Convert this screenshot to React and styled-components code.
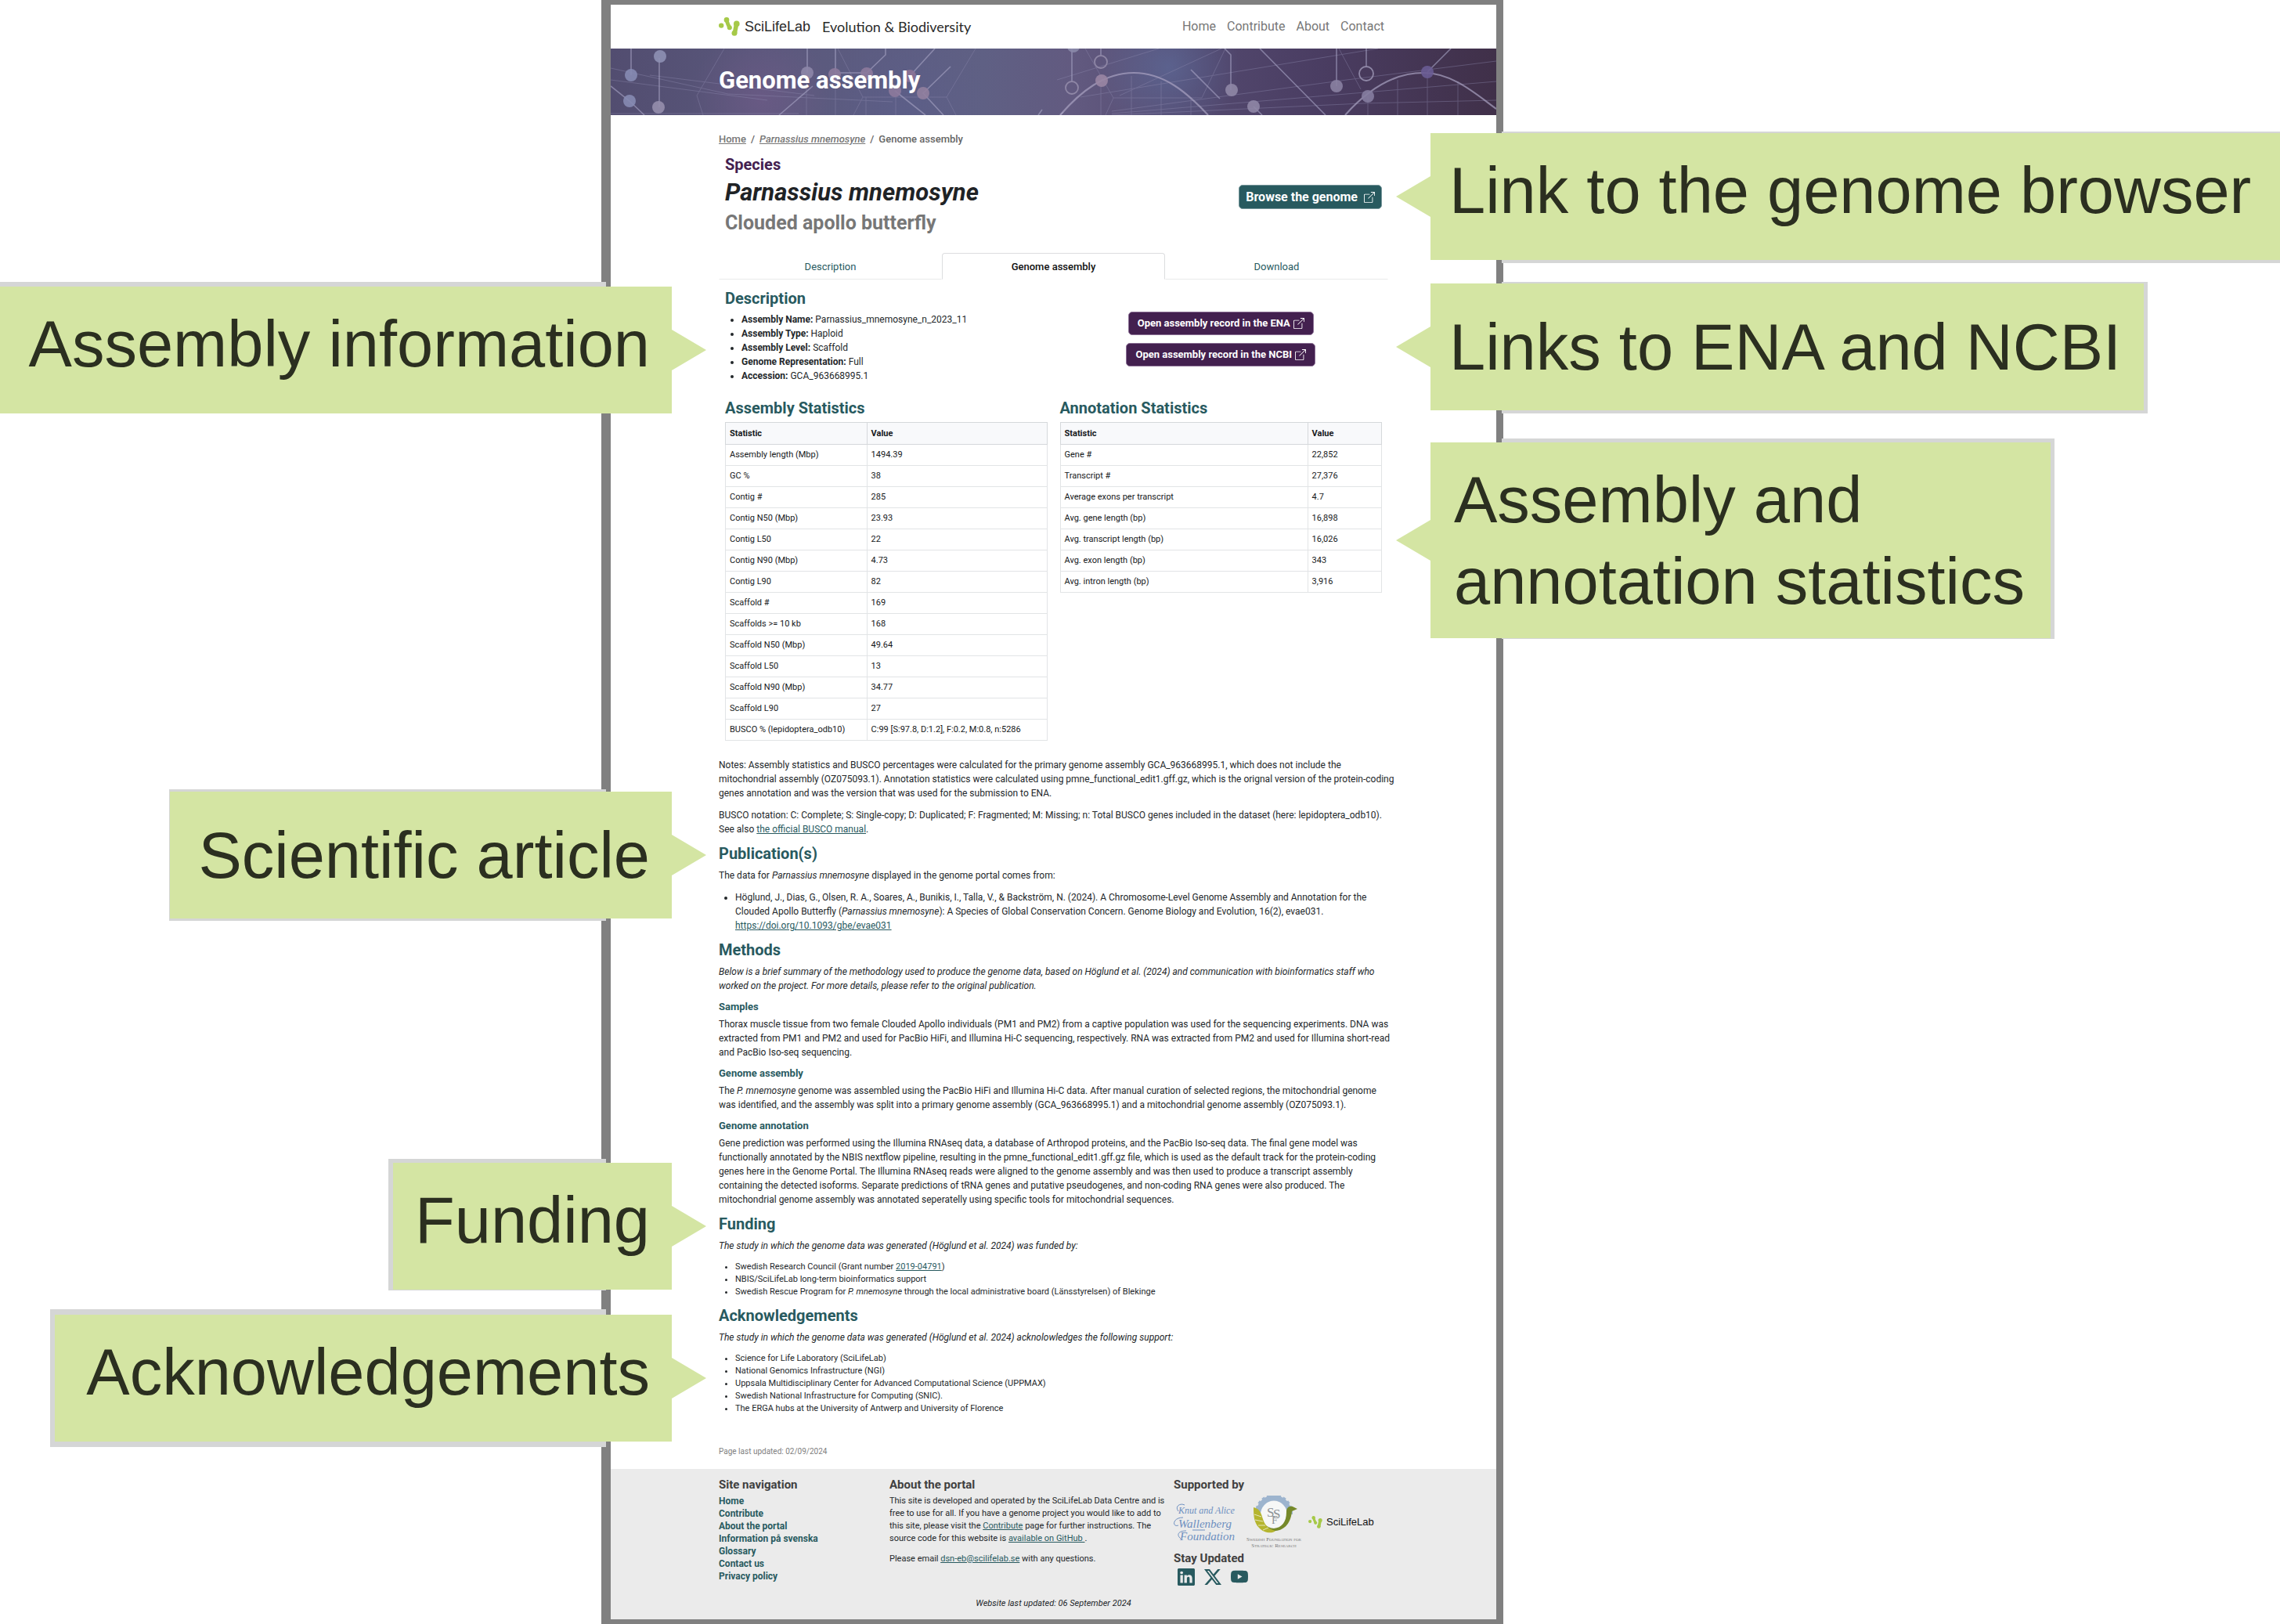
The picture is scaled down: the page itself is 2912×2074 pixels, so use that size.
import React from 'react';
import styled, { createGlobalStyle } from 'styled-components';
import { BsBoxArrowUpRight, BsLinkedin, BsTwitterX, BsYoutube } from 'react-icons/bs';

const teal = '#285a5f';
const purple = '#43204f';
const ink = '#23272a';
const lime = '#d4e5a3';

const GlobalStyle = createGlobalStyle`
  *, *::before, *::after { box-sizing: border-box; }
  body {
    margin: 0;
    background: #fff;
    color: ${ink};
    font-family: Roboto, "Noto Sans", sans-serif;
    font-size: 12px;
    line-height: 18px;
  }
  a { color: ${teal}; }
`;

/* ---------- stage and page frame ---------- */

const Stage = styled.div`
  display: grid;
  grid-template-columns: 24fr 36fr 31fr;
  min-height: 100vh;
  overflow: hidden;
`;

const Frame = styled.div`
  grid-column: 2;
  position: relative;
  display: flex;
  flex-direction: column;
  border: solid #808080;
  border-width: 6px 9px 6px 12px;
`;

/* ---------- callouts ---------- */

const Callout = styled.aside`
  position: absolute;
  z-index: 1;
  top: ${(p) => p.$top}px;
  ${(p) => (p.$side === 'left' ? 'right: calc(100% - 78px);' : 'left: calc(100% - 84px);')}
  width: ${(p) => p.$width}px;
  min-height: 162px;
  padding: ${(p) => (p.$low ? 30 : 22)}px ${(p) => p.$pad}px 20px;
  background: ${lime};
  color: #2b2f20;
  font-family: "Liberation Sans", Arial, sans-serif;
  font-size: 83px;
  line-height: 104px;
  text-align: ${(p) => (p.$side === 'left' ? 'right' : 'left')};
  white-space: nowrap;

  &::before {
    content: "";
    position: absolute;
    z-index: -1;
    top: ${(p) => -p.$rim[0]}px;
    bottom: ${(p) => -p.$rim[2]}px;
    background: linear-gradient(${lime}, ${lime}) content-box, #d5d6d6;
    ${(p) =>
      p.$side === 'left'
        ? `left: ${-p.$rim[1]}px; right: 84px; padding-left: ${p.$rim[1]}px;`
        : `right: ${-p.$rim[1]}px; left: 91px; padding-right: ${p.$rim[1]}px;`}
    padding-top: ${(p) => p.$rim[0]}px;
    padding-bottom: ${(p) => p.$rim[2]}px;
  }

  &::after {
    content: "";
    position: absolute;
    top: calc(50% - 26px);
    ${(p) => (p.$side === 'left' ? 'left: 100%;' : 'right: 100%;')}
    width: 44px;
    height: 52px;
    background: ${lime};
    clip-path: ${(p) =>
      p.$side === 'left' ? 'polygon(0 0, 100% 50%, 0 100%)' : 'polygon(100% 0, 0 50%, 100% 100%)'};
  }
`;

/* ---------- header ---------- */

const TopBar = styled.header`
  display: flex;
  align-items: center;
  justify-content: space-between;
  height: 56px;
  padding: 0 143px 0 138px;
`;

const Brand = styled.a`
  display: flex;
  align-items: center;
  gap: 6px;
  color: #2a2a2a;
  text-decoration: none;
`;

const BrandName = styled.span`
  color: ${(p) => (p.$dark ? '#111' : '#2a2a2a')};
  font-family: "Liberation Sans", Arial, sans-serif;
  font-size: ${(p) => p.$size}px;
  line-height: 20px;
`;

const BrandUnit = styled.span`
  margin-left: 9px;
  font-family: Lato, sans-serif;
  font-size: 18px;
  line-height: 20px;
`;

const Nav = styled.nav`
  display: flex;
  gap: 14px;
`;

const NavLink = styled.a`
  color: #777;
  font-size: 16px;
  font-weight: 400;
  line-height: 20px;
  text-decoration: none;
`;

const Banner = styled.div`
  position: relative;
  height: 85px;
  padding: 22px 138px;
  overflow: hidden;
  background:
    radial-gradient(circle at 17% 75%, rgba(122, 92, 142, 0.45), transparent 90px),
    radial-gradient(circle at 63% 28%, rgba(96, 118, 168, 0.5), transparent 90px),
    radial-gradient(circle at 33% 90%, rgba(90, 96, 150, 0.3), transparent 110px),
    linear-gradient(90deg, #524d70, #5a587c 18%, #5f6084 42%, #625a80 52%, #53496f 66%, #4a3d62 80%, #403049);
`;

const BannerArt = styled.svg`
  position: absolute;
  inset: 0;
  width: 100%;
  height: 100%;
`;

const BannerTitle = styled.h1`
  position: relative;
  margin: 0;
  color: #fff;
  font-size: 31px;
  font-weight: 700;
  line-height: 38px;
`;

/* ---------- page body ---------- */

const Body = styled.main`
  flex: 1;
  padding: 22px 138px 13px;
`;

const Crumbs = styled.nav`
  display: flex;
  gap: 6px;
  color: #666;
  font-size: 13px;
  font-weight: 500;
  a { color: #777; }
`;

const Hero = styled.section`
  display: flex;
  justify-content: space-between;
  align-items: flex-start;
  padding: 11px 8px 22px;
`;

const Kicker = styled.p`
  margin: 0 0 6px;
  color: ${purple};
  font-size: 20px;
  font-weight: 700;
  line-height: 24px;
`;

const Species = styled.h2`
  margin: 0 0 5px;
  color: #1f2326;
  font-size: 31px;
  font-style: italic;
  font-weight: 700;
  line-height: 36px;
`;

const CommonName = styled.p`
  margin: 0;
  color: #777;
  font-size: 25px;
  font-weight: 700;
  line-height: 32px;
`;

const Button = styled.a`
  display: inline-flex;
  align-items: center;
  gap: ${(p) => (p.$large ? 8 : 4)}px;
  height: ${(p) => (p.$large ? 31 : 30)}px;
  margin-top: ${(p) => (p.$large ? 38 : 0)}px;
  padding: 0 ${(p) => (p.$large ? 8 : 11)}px;
  border: 1px solid ${(p) => (p.$large ? '#76969a' : '#8a6f94')};
  border-radius: 5px;
  background: ${(p) => (p.$large ? teal : purple)};
  color: #fff;
  font-size: ${(p) => (p.$large ? 16 : 13)}px;
  font-weight: 700;
  text-decoration: none;
  white-space: nowrap;
`;

const Tabs = styled.nav`
  display: grid;
  grid-template-columns: repeat(3, 1fr);
`;

const Tab = styled.a`
  height: 34px;
  border: 1px solid transparent;
  border-bottom-color: #e9eaeb;
  color: ${teal};
  font-size: 13px;
  font-weight: 400;
  line-height: 34px;
  text-align: center;
  text-decoration: none;
  ${(p) =>
    p.$active &&
    `border-color: #dcdddf;
     border-bottom-color: transparent;
     border-radius: 4px 4px 0 0;
     color: #111;
     font-weight: 500;`}
`;

const Split = styled.div`
  display: grid;
  grid-template-columns: 1fr 1fr;
  column-gap: 16px;
  padding: 0 8px;
`;

const SectionTitle = styled.h2`
  margin: 10px 0 7px;
  color: ${teal};
  font-size: 20px;
  font-weight: 700;
  line-height: 24px;
`;

const SubTitle = styled.h3`
  margin: 10px 0 5px;
  color: ${teal};
  font-size: 13px;
  font-weight: 700;
  line-height: 16px;
`;

const PanelTitle = styled(SectionTitle)`
  margin: ${(p) => p.$above}px 0 6px;
`;

const List = styled.ul`
  margin: ${(p) => (p.$flush ? 0 : 10)}px 0 0;
  padding-left: 21px;
  ${(p) => p.$compact && 'font-size: 11px; line-height: 16px;'}
`;

const Records = styled.div`
  display: flex;
  flex-direction: column;
  align-items: center;
  gap: 10px;
  padding-top: 41px;
`;

const StatTable = styled.table`
  width: 100%;
  border-collapse: collapse;
  table-layout: fixed;
  color: #15181a;
  font-size: 11px;
  line-height: 16px;

  th, td {
    height: 27px;
    padding: 0 5px;
    border: 1px solid #e2e4e6;
    text-align: left;
  }
  th {
    height: 28px;
    border-color: #d5d8db;
    background: #f8f9fb;
    font-weight: 700;
  }
  th:first-child { width: ${(p) => p.$first}%; }
`;

const Prose = styled.section`
  margin-top: ${(p) => (p.$spaced ? 22 : 0)}px;
  margin-right: -20px;
`;

const Para = styled.p`
  margin: 0;
  font-style: ${(p) => (p.$italic ? 'italic' : 'normal')};
  & + & { margin-top: 10px; }
`;

const Updated = styled.p`
  margin: 39px 0 0;
  color: #808080;
  font-size: 10px;
  line-height: 16px;
`;

/* ---------- footer ---------- */

const Footer = styled.footer`
  padding: 10px 138px 12px;
  background: #ebebeb;
  font-size: 11px;
  line-height: 16px;
`;

const FooterGrid = styled.div`
  display: grid;
  grid-template-columns: 218px 363px 1fr;
  min-height: 154px;
`;

const FooterTitle = styled.h2`
  margin: 0 0 3px;
  color: #404040;
  font-size: 15px;
  font-weight: 700;
  line-height: 20px;
`;

const FooterLinks = styled.nav`
  display: flex;
  flex-direction: column;
  font-size: 12px;
  font-weight: 700;
  a { text-decoration: none; }
`;

const Logos = styled.div`
  display: flex;
  align-items: center;
  gap: 4px;
  height: 69px;
  margin-bottom: 2px;
`;

const SciLife = styled.div`
  display: flex;
  align-items: center;
  gap: 5px;
`;

const Social = styled.div`
  display: flex;
  gap: 12px;
  padding-left: 5px;
  a { display: flex; }
`;

const FootNote = styled.p`
  margin: 0;
  font-style: italic;
  text-align: center;
`;

/* ---------- drawings ---------- */

const Mark = ({ size }) => (
  <svg width={size} height={(size * 24) / 27} viewBox="0 0 27 24" fill="#a6c948" stroke="#a6c948" strokeLinecap="round" aria-hidden="true">
    <circle cx="3.2" cy="10.6" r="3.2" stroke="none" />
    <circle cx="10" cy="3.4" r="3.3" stroke="none" />
    <path d="M10 4 L11.8 9 L13.8 13.4" strokeWidth="4.8" fill="none" />
    <circle cx="13.8" cy="13.2" r="3" stroke="none" />
    <circle cx="22.8" cy="8.4" r="3.8" stroke="none" />
    <path d="M22.6 9 L20.4 20" strokeWidth="5.6" fill="none" />
    <circle cx="20" cy="20.2" r="3.5" stroke="none" />
  </svg>
);

const discs = [
  [26, 34, '#868bb2'], [63, 10, '#8e90b4'], [61, 75, '#968ead'], [24, 67, '#868bb2'],
  [251, 31, '#8d86a8'], [286, 33, '#8d7a9c'], [327, 32, '#8d7a9c'], [382, 35, '#8b7396'],
  [363, 54, '#8d7a9c'], [399, 57, '#917f9f'], [591, -3, '#8b89aa'], [627, 41, '#9a86a4'],
  [793, 53, '#8f87a6'], [821, 74, '#8f87a6'], [927, 48, '#8a81a2'], [967, 61, '#857da0'], [1043, 30, '#6a5c94'],
];

const Network = () => (
  <BannerArt viewBox="0 0 1131 85" preserveAspectRatio="none" fill="none" aria-hidden="true">
    <g stroke="#8f8bb0" strokeWidth="1" opacity="0.4">
      <path d="M0 25 L150 58 L360 68 M0 40 L200 66 M0 83 L240 83 M50 34 L260 60" />
      <path d="M145 0 L110 60 L118 85 M290 0 L322 62 H429 L466 0 M322 62 L310 85 M429 62 L441 85" />
      <path d="M250 40 V85 M287 40 V85 M326 62 V85 M364 62 V85" />
      <path d="M640 85 L960 70 L1131 66 M640 80 L940 40 L1131 16 M600 62 L980 0 M570 40 L700 0 M650 60 L780 0 M640 83 L1131 42" />
      <path d="M606 0 L642 63 H755 L785 0 M642 63 L632 85 M626 45 V85 M665 35 V85 M703 42 V85 M741 62 V85" />
      <path d="M930 0 L958 52 M967 61 V85 M1005 40 V85 M1043 30 V85 M1082 42 V85" />
    </g>
    <g stroke="#a39fc0" strokeWidth="1.6" opacity="0.65">
      <path d="M26 0 V34 M62 12 V75 M0 48 L24 67 L43 85" />
      <path d="M251 0 V31 M287 0 V33 M286 31 H327 L351 8 V0 M414 0 L382 35 M434 23 L399 57 L425 85 M363 54 L402 85 M258 48 L215 85" />
      <path d="M551 78 L546 85 M578 81 L574 85 M589 0 V42 M626 0 V8 M784 0 L792 8 V53 M741 27 L778 64 M821 74 L832 85 M829 0 L913 85" />
      <path d="M927 0 V48 M965 0 V23 M1043 30 L1073 0" />
    </g>
    <g stroke="#a9a3c2" strokeWidth="2.2" opacity="0.7">
      <path d="M574 85 C600 55 630 31 668 31 C706 31 735 55 763 85" />
      <path d="M938 85 C962 58 995 31 1038 31 C1075 31 1105 58 1131 77" />
    </g>
    <g stroke="#8f87a6" strokeWidth="1.8">
      <circle cx="589" cy="50" r="8" />
      <circle cx="626" cy="17" r="8" />
      <circle cx="965" cy="32" r="9" />
    </g>
    {discs.map(([x, y, c]) => (
      <circle key={`${x}-${y}`} cx={x} cy={y} r="8" fill={c} opacity="0.9" />
    ))}
  </BannerArt>
);

const WallenbergLogo = () => (
  <svg width="84" height="52" viewBox="0 0 84 52" role="img" aria-label="Knut and Alice Wallenberg Foundation">
    <g fill="#6d8fc0" fontFamily="'Liberation Serif', serif" fontStyle="italic">
      <text x="6" y="15" fontSize="12">Knut and Alice</text>
      <text x="6" y="33" fontSize="15">Wallenberg</text>
      <text x="8" y="49" fontSize="15">Foundation</text>
    </g>
    <path d="M6 12 C1 6 8 1 14 4 M12 20 C-2 20 -2 33 6 30 M9 47 C3 42 6 37 16 37 M24 36 H40" fill="none" stroke="#6d8fc0" />
  </svg>
);

const teeth = Array.from({ length: 11 }, (_, i) => -180 + i * 18);

const SsfLogo = () => (
  <svg width="80" height="68" viewBox="0 0 80 68" role="img" aria-label="Swedish Foundation for Strategic Research">
    <path d="M21 22 A19 19 0 0 1 59 22" fill="none" stroke="#9db4ce" strokeWidth="7" />
    {teeth.map((a) => (
      <rect key={a} x="60" y="20" width="4" height="4" fill="#9db4ce" transform={`rotate(${a} 40 22)`} />
    ))}
    <circle cx="40" cy="24" r="17" fill="#f6f7f7" />
    <path d="M17 23 C19 50 60 56 63 20 L70 17 L64 14 C58 13 56 17 56 21 C56 34 50 41 40 42 C30 41 24 35 24 24 Z" fill="#76892a" />
    <path d="M14 15 C23 17 24 24 26 30 C28 37 33 43 42 45 C38 49 27 48 21 41 C15 35 14 27 14 15" fill="#b5b52f" />
    <path d="M15 24 L24 27 M16 31 L26 33 M20 38 L29 38 M26 44 L33 41" stroke="#e4e5b8" strokeWidth="1" />
    <g fill="#8d9296" fontFamily="'Liberation Serif', serif">
      <text x="31" y="27" fontSize="17">S</text>
      <text x="39" y="29" fontSize="17">S</text>
      <text x="37" y="36" fontSize="14">F</text>
    </g>
    <g fill="#777" fontFamily="'Liberation Serif', serif" textAnchor="middle" fontSize="7" style={{ fontVariant: 'small-caps' }}>
      <text x="40" y="58">Swedish Foundation for</text>
      <text x="40" y="66">Strategic Research</text>
    </g>
  </svg>
);

/* ---------- data ---------- */

const callouts = [
  { text: 'Link to the genome browser', side: 'right', top: 164, width: 1092, pad: 24, rim: [2, 5, 4] },
  { text: 'Links to ENA and NCBI', side: 'right', top: 356, width: 911, pad: 24, rim: [2, 5, 4], low: true },
  { text: <>Assembly and<br />annotation statistics</>, side: 'right', top: 559, width: 792, pad: 30, rim: [5, 5, 1] },
  { text: 'Assembly information', side: 'left', top: 360, width: 864, pad: 28, rim: [6, 5, 0] },
  { text: 'Scientific article', side: 'left', top: 1005, width: 641, pad: 28, rim: [3, 1, 3], low: true },
  { text: 'Funding', side: 'left', top: 1479, width: 356, pad: 28, rim: [5, 6, 1] },
  { text: 'Acknowledgements', side: 'left', top: 1673, width: 788, pad: 28, rim: [7, 6, 7] },
];

const facts = [
  ['Assembly Name:', 'Parnassius_mnemosyne_n_2023_11'],
  ['Assembly Type:', 'Haploid'],
  ['Assembly Level:', 'Scaffold'],
  ['Genome Representation:', 'Full'],
  ['Accession:', 'GCA_963668995.1'],
];

const assemblyStats = [
  ['Assembly length (Mbp)', '1494.39'],
  ['GC %', '38'],
  ['Contig #', '285'],
  ['Contig N50 (Mbp)', '23.93'],
  ['Contig L50', '22'],
  ['Contig N90 (Mbp)', '4.73'],
  ['Contig L90', '82'],
  ['Scaffold #', '169'],
  ['Scaffolds >= 10 kb', '168'],
  ['Scaffold N50 (Mbp)', '49.64'],
  ['Scaffold L50', '13'],
  ['Scaffold N90 (Mbp)', '34.77'],
  ['Scaffold L90', '27'],
  ['BUSCO % (lepidoptera_odb10)', 'C:99 [S:97.8, D:1.2], F:0.2, M:0.8, n:5286'],
];

const annotationStats = [
  ['Gene #', '22,852'],
  ['Transcript #', '27,376'],
  ['Average exons per transcript', '4.7'],
  ['Avg. gene length (bp)', '16,898'],
  ['Avg. transcript length (bp)', '16,026'],
  ['Avg. exon length (bp)', '343'],
  ['Avg. intron length (bp)', '3,916'],
];

const Stats = ({ title, rows, first }) => (
  <section>
    <PanelTitle $above={20}>{title}</PanelTitle>
    <StatTable $first={first} aria-label={title}>
      <thead>
        <tr><th scope="col">Statistic</th><th scope="col">Value</th></tr>
      </thead>
      <tbody>
        {rows.map(([name, value]) => (
          <tr key={name}><td>{name}</td><td>{value}</td></tr>
        ))}
      </tbody>
    </StatTable>
  </section>
);

export default function App() {
  return (
    <>
      <GlobalStyle />
      <Stage>
        <Frame>
          <TopBar>
            <Brand href="#home">
              <Mark size={27} />
              <BrandName $size={18}>SciLifeLab</BrandName>
              <BrandUnit>Evolution &amp; Biodiversity</BrandUnit>
            </Brand>
            <Nav aria-label="Main">
              {['Home', 'Contribute', 'About', 'Contact'].map((t) => (
                <NavLink key={t} href={`#${t.toLowerCase()}`}>{t}</NavLink>
              ))}
            </Nav>
          </TopBar>
          <Banner>
            <Network />
            <BannerTitle>Genome assembly</BannerTitle>
          </Banner>

          <Body>
            <Crumbs aria-label="Breadcrumb">
              <a href="#home">Home</a>
              <span>/</span>
              <a href="#species"><em>Parnassius mnemosyne</em></a>
              <span>/</span>
              <span>Genome assembly</span>
            </Crumbs>

            <Hero>
              <div>
                <Kicker>Species</Kicker>
                <Species>Parnassius mnemosyne</Species>
                <CommonName>Clouded apollo butterfly</CommonName>
              </div>
              <Button href="#browser" $large>Browse the genome <BsBoxArrowUpRight size={14} /></Button>
            </Hero>

            <Tabs aria-label="Species pages">
              <Tab href="#description">Description</Tab>
              <Tab href="#assembly" $active aria-current="page">Genome assembly</Tab>
              <Tab href="#download">Download</Tab>
            </Tabs>

            <Split>
              <section>
                <PanelTitle $above={12}>Description</PanelTitle>
                <List $flush>
                  {facts.map(([k, v]) => (
                    <li key={k}><strong>{k}</strong> {v}</li>
                  ))}
                </List>
              </section>
              <Records>
                <Button href="#ena">Open assembly record in the ENA <BsBoxArrowUpRight size={14} /></Button>
                <Button href="#ncbi">Open assembly record in the NCBI <BsBoxArrowUpRight size={14} /></Button>
              </Records>
              <Stats title="Assembly Statistics" rows={assemblyStats} first={44} />
              <Stats title="Annotation Statistics" rows={annotationStats} first={77} />
            </Split>

            <Prose $spaced>
              <Para>
                Notes: Assembly statistics and BUSCO percentages were calculated for the primary genome assembly GCA_963668995.1, which does not include the<br />
                mitochondrial assembly (OZ075093.1). Annotation statistics were calculated using pmne_functional_edit1.gff.gz, which is the orignal version of the protein-coding<br />
                genes annotation and was the version that was used for the submission to ENA.
              </Para>
              <Para>
                BUSCO notation: C: Complete; S: Single-copy; D: Duplicated; F: Fragmented; M: Missing; n: Total BUSCO genes included in the dataset (here: lepidoptera_odb10).<br />
                See also <a href="#busco">the official BUSCO manual</a>.
              </Para>
            </Prose>

            <Prose>
              <SectionTitle>Publication(s)</SectionTitle>
              <Para>The data for <em>Parnassius mnemosyne</em> displayed in the genome portal comes from:</Para>
              <List>
                <li>
                  Höglund, J., Dias, G., Olsen, R. A., Soares, A., Bunikis, I., Talla, V., &amp; Backström, N. (2024). A Chromosome-Level Genome Assembly and Annotation for the<br />
                  Clouded Apollo Butterfly (<em>Parnassius mnemosyne</em>): A Species of Global Conservation Concern. Genome Biology and Evolution, 16(2), evae031.<br />
                  <a href="#doi">https://doi.org/10.1093/gbe/evae031</a>
                </li>
              </List>
            </Prose>

            <Prose>
              <SectionTitle>Methods</SectionTitle>
              <Para $italic>
                Below is a brief summary of the methodology used to produce the genome data, based on Höglund et al. (2024) and communication with bioinformatics staff who<br />
                worked on the project. For more details, please refer to the original publication.
              </Para>
              <SubTitle>Samples</SubTitle>
              <Para>
                Thorax muscle tissue from two female Clouded Apollo individuals (PM1 and PM2) from a captive population was used for the sequencing experiments. DNA was<br />
                extracted from PM1 and PM2 and used for PacBio HiFi, and Illumina Hi-C sequencing, respectively. RNA was extracted from PM2 and used for Illumina short-read<br />
                and PacBio Iso-seq sequencing.
              </Para>
              <SubTitle>Genome assembly</SubTitle>
              <Para>
                The <em>P. mnemosyne</em> genome was assembled using the PacBio HiFi and Illumina Hi-C data. After manual curation of selected regions, the mitochondrial genome<br />
                was identified, and the assembly was split into a primary genome assembly (GCA_963668995.1) and a mitochondrial genome assembly (OZ075093.1).
              </Para>
              <SubTitle>Genome annotation</SubTitle>
              <Para>
                Gene prediction was performed using the Illumina RNAseq data, a database of Arthropod proteins, and the PacBio Iso-seq data. The final gene model was<br />
                functionally annotated by the NBIS nextflow pipeline, resulting in the pmne_functional_edit1.gff.gz file, which is used as the default track for the protein-coding<br />
                genes here in the Genome Portal. The Illumina RNAseq reads were aligned to the genome assembly and was then used to produce a transcript assembly<br />
                containing the detected isoforms. Separate predictions of tRNA genes and putative pseudogenes, and non-coding RNA genes were also produced. The<br />
                mitochondrial genome assembly was annotated seperatelly using specific tools for mitochondrial sequences.
              </Para>
            </Prose>

            <Prose>
              <SectionTitle>Funding</SectionTitle>
              <Para $italic>The study in which the genome data was generated (Höglund et al. 2024) was funded by:</Para>
              <List $compact>
                <li>Swedish Research Council (Grant number <a href="#grant">2019-04791</a>)</li>
                <li>NBIS/SciLifeLab long-term bioinformatics support</li>
                <li>Swedish Rescue Program for <em>P. mnemosyne</em> through the local administrative board (Länsstyrelsen) of Blekinge</li>
              </List>
            </Prose>

            <Prose>
              <SectionTitle>Acknowledgements</SectionTitle>
              <Para $italic>The study in which the genome data was generated (Höglund et al. 2024) acknolowledges the following support:</Para>
              <List $compact>
                <li>Science for Life Laboratory (SciLifeLab)</li>
                <li>National Genomics Infrastructure (NGI)</li>
                <li>Uppsala Multidisciplinary Center for Advanced Computational Science (UPPMAX)</li>
                <li>Swedish National Infrastructure for Computing (SNIC).</li>
                <li>The ERGA hubs at the University of Antwerp and University of Florence</li>
              </List>
            </Prose>

            <Updated>Page last updated: 02/09/2024</Updated>
          </Body>

          <Footer>
            <FooterGrid>
              <div>
                <FooterTitle>Site navigation</FooterTitle>
                <FooterLinks aria-label="Site">
                  {['Home', 'Contribute', 'About the portal', 'Information på svenska', 'Glossary', 'Contact us', 'Privacy policy'].map((t) => (
                    <a key={t} href="#site">{t}</a>
                  ))}
                </FooterLinks>
              </div>
              <div>
                <FooterTitle>About the portal</FooterTitle>
                <Para>
                  This site is developed and operated by the SciLifeLab Data Centre and is<br />
                  free to use for all. If you have a genome project you would like to add to<br />
                  this site, please visit the <a href="#contribute">Contribute</a> page for further instructions. The<br />
                  source code for this website is <a href="#github">available on GitHub </a>.
                </Para>
                <Para>Please email <a href="#mail">dsn-eb@scilifelab.se</a> with any questions.</Para>
              </div>
              <div>
                <FooterTitle>Supported by</FooterTitle>
                <Logos>
                  <WallenbergLogo />
                  <SsfLogo />
                  <SciLife>
                    <Mark size={18} />
                    <BrandName $size={13} $dark>SciLifeLab</BrandName>
                  </SciLife>
                </Logos>
                <FooterTitle>Stay Updated</FooterTitle>
                <Social>
                  <a href="#linkedin" aria-label="LinkedIn"><BsLinkedin size={22} /></a>
                  <a href="#x" aria-label="X"><BsTwitterX size={22} /></a>
                  <a href="#youtube" aria-label="YouTube"><BsYoutube size={22} /></a>
                </Social>
              </div>
            </FooterGrid>
            <FootNote>Website last updated: 06 September 2024</FootNote>
          </Footer>

          {callouts.map((c) => (
            <Callout key={c.top} $side={c.side} $top={c.top} $width={c.width} $pad={c.pad} $rim={c.rim} $low={c.low}>
              {c.text}
            </Callout>
          ))}
        </Frame>
      </Stage>
    </>
  );
}
